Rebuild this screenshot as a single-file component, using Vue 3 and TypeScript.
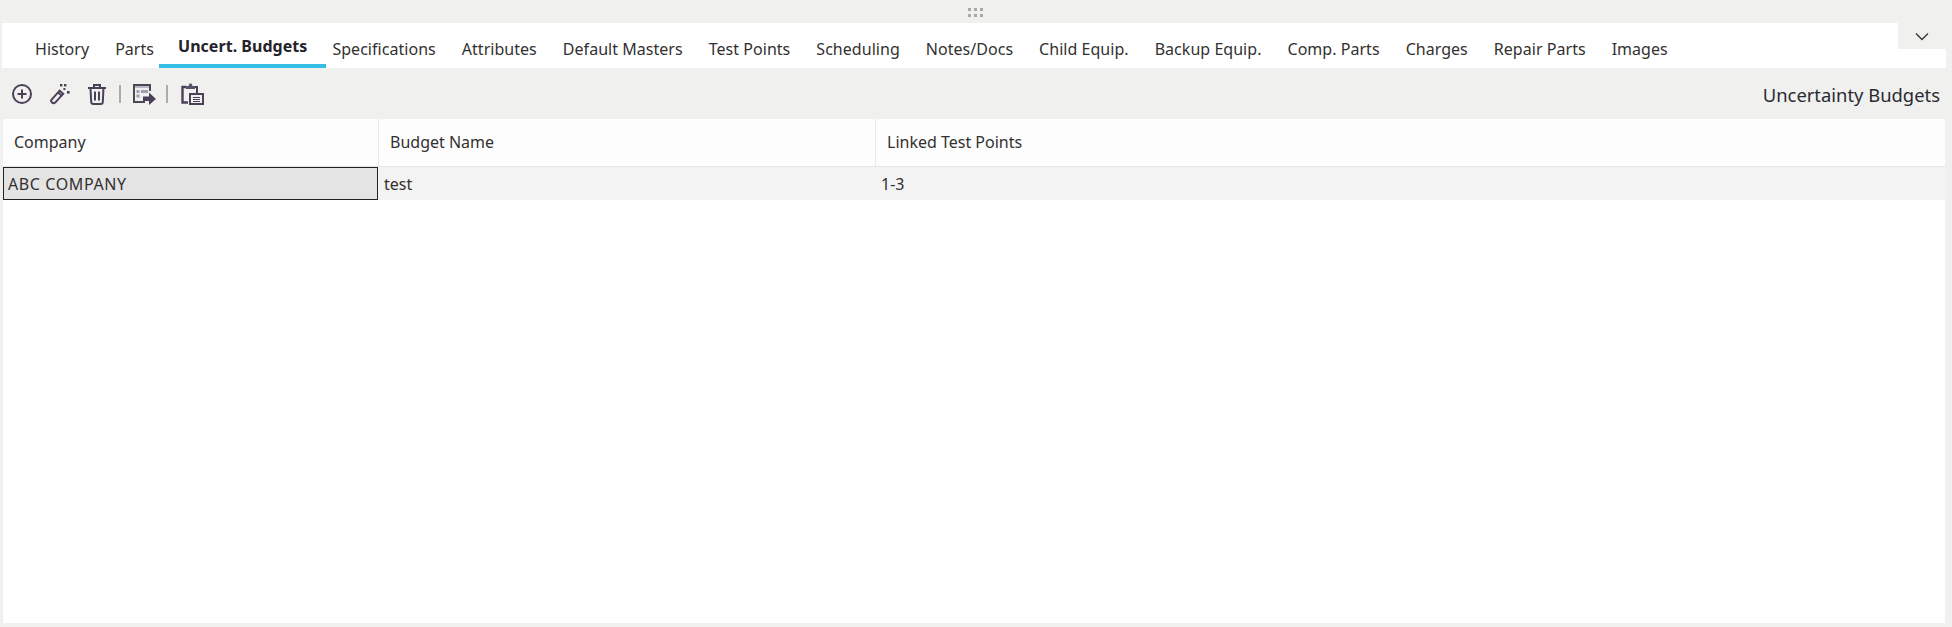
<script setup lang="ts">
const tabs: string[] = ['History','Parts','Uncert. Budgets','Specifications','Attributes','Default Masters','Test Points','Scheduling','Notes/Docs','Child Equip.','Backup Equip.','Comp. Parts','Charges','Repair Parts','Images']
const active = 'Uncert. Budgets'
</script>

<template>
  <div class="page">
    <div class="grip">
      <svg width="16" height="9" viewBox="0 0 16 9"><g fill="#a8a8a8"><rect x="0" y="0" width="3" height="3"/><rect x="6" y="0" width="3" height="3"/><rect x="12" y="0" width="3" height="3"/><rect x="0" y="6" width="3" height="3"/><rect x="6" y="6" width="3" height="3"/><rect x="12" y="6" width="3" height="3"/></g></svg>
    </div>
    <div class="tabbar">
      <div class="tabs">
        <div v-for="t in tabs" :key="t" class="tab" :class="{ active: t === active }">{{ t }}</div>
      </div>
      <div class="more">
        <svg width="14" height="9" viewBox="0 0 14 9"><path d="M1 1.5 L7 7.5 L13 1.5" fill="none" stroke="#333" stroke-width="1.3"/></svg>
      </div>
    </div>
    <div class="toolbar">
      <div class="tools">
        <svg class="ico" width="22" height="22" viewBox="0 0 22 22"><circle cx="11" cy="11" r="9" fill="none" stroke="#4a4159" stroke-width="2"/><path d="M11 6.5v9M6.5 11h9" stroke="#4a4159" stroke-width="2" fill="none"/></svg>
        <svg class="ico wand" width="22" height="22" viewBox="0 0 22 22"><g fill="none" stroke="#4a4159" stroke-width="2"><path d="M2.6 16.6 L10.6 7.6 L14.2 10.8 L6.2 19.6 Q4.6 21 3 19.6 Q1.4 18 2.6 16.6Z"/><path d="M9 9.4 L12.6 12.6"/></g><g fill="#4a4159"><rect x="11" y="1" width="2.4" height="2.4"/><rect x="15" y="1" width="2.4" height="2.4"/><rect x="18" y="8" width="2.6" height="2.6"/><rect x="14.4" y="5" width="2" height="2"/></g></svg>
        <svg class="ico trash" width="20" height="22" viewBox="0 0 20 22"><g fill="none" stroke="#4a4159" stroke-width="2"><path d="M1 5h18M7 5V2h6v3M3.5 5l.7 14q.1 2 2 2h7.600q1.900 0 2-2l.7-14M8 8.500v9M12 8.500v9"/></g></svg>
        <span class="sep"></span>
        <svg class="ico exp" width="24" height="22" viewBox="0 0 24 22"><path d="M18 8V2H2v17h11" fill="none" stroke="#4a4a55" stroke-width="2"/><path d="M3 3h14v2H3z" fill="#bdb8c4"/><path d="M4.500 7h3v3h-3zM4.500 11.500h3v3h-3zM9 7h7v3H9z" fill="#a49cb0"/><path d="M11 13.500h6V9.500l7 6.500-7 6v-4h-6z" fill="#4a4159"/></svg>
        <span class="sep sep2"></span>
        <svg class="ico clip" width="23" height="22" viewBox="0 0 23 22"><g fill="none" stroke="#4a4159"><path d="M5 4H1.500v15.500H7" stroke-width="2.400"/><path d="M13 4h3v6" stroke-width="2"/><rect x="9" y="11" width="13" height="10" stroke-width="2" fill="#f0f0ee"/><path d="M12 14.500h7M12 16.500h7M12 18.500h7" stroke-width="1.200"/></g><path d="M5 6V3h2.500L8.500 0.500h2L11.500 3H14v3z" fill="#5a5268"/></svg>
      </div>
      <div class="title">Uncertainty Budgets</div>
    </div>
    <div class="grid">
      <div class="head row">
        <div class="c1">Company</div>
        <div class="c2">Budget Name</div>
        <div class="c3">Linked Test Points</div>
      </div>
      <div class="body row">
        <div class="c1 sel">ABC COMPANY</div>
        <div class="c2">test</div>
        <div class="c3">1-3</div>
      </div>
    </div>
  </div>
</template>

<style>
html, body { margin: 0; background: #f0f0ee; }
</style>

<style scoped>
.page {
  width: 1952px; height: 627px; overflow: hidden; background: #f0f0ee;
  display: flex; flex-direction: column;
  font-family: "Noto Sans", "Open Sans", sans-serif; font-size: 16px; color: #323130;
}
.grip { height: 23px; display: flex; justify-content: center; align-items: flex-start; padding-top: 8px; box-sizing: border-box; }
.tabbar { height: 45px; margin: 0 6px 0 2px; background: #fff; position: relative; flex: none; }
.tabs { display: flex; padding-left: 20px; height: 45px; }
.tab { padding: 0 13px; height: 45px; line-height: 52px; box-sizing: border-box; white-space: nowrap; letter-spacing: 0.035px; }
.tab.active { font-weight: 700; line-height: 47px; padding: 0 19px; margin: 0 -7px 0 -8px; border-bottom: 4px solid #36bde3; color: #24222b; }
.more { position: absolute; right: 0; top: 0; width: 48px; height: 26px; background: #f0f0ee; display: flex; align-items: center; justify-content: center; }
.toolbar { height: 51px; flex: none; display: flex; align-items: center; justify-content: space-between; padding: 0 12px 0 11px; }
.tools { display: flex; align-items: center; }
.ico { display: block; }
.wand { margin-left: 16px; }
.trash { margin-left: 16px; }
.sep { width: 2px; height: 18px; background: #acacac; margin: 0 11px 0 12px; }
.sep2 { margin: 0 13px 0 10px; }
.title { font-size: 18.400px; color: #2b2a33; padding-top: 2px; }
.grid { flex: 1; margin: 0 7px 4px 3px; background: #fff; display: flex; flex-direction: column; }
.row { display: grid; grid-template-columns: 376px 497px 1fr; }
.head { height: 48px; background: #fdfdfd; border-bottom: 1px solid #e6e6e6; box-sizing: border-box; }
.head > div { padding-left: 11px; line-height: 47px; border-right: 1px solid #eaeaea; }
.head .c3 { border-right: 0; }
.body { height: 33px; background: #f3f3f3; overflow: hidden; }
.body > div { padding-left: 5px; line-height: 35px; }
.body .sel { height: 33px; background: #e4e4e4; border: 1px solid #222; box-sizing: border-box; padding-left: 4px; line-height: 33px; margin-right: 1px; letter-spacing: 0.6px; }
</style>
